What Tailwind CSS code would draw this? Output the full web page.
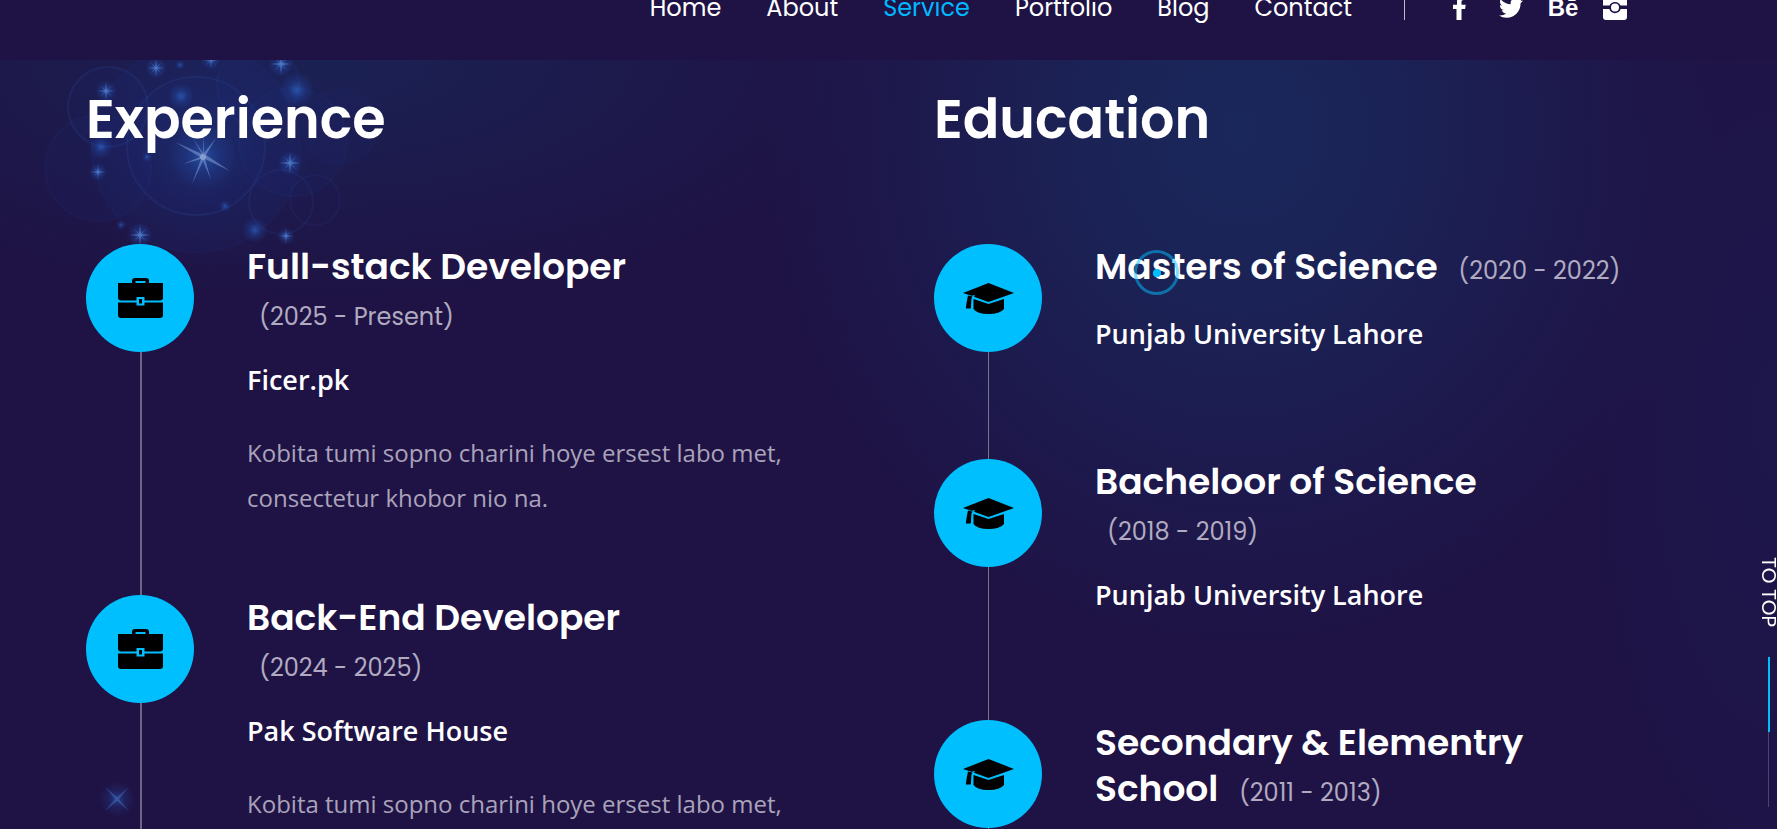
<!DOCTYPE html>
<html lang="en">
<head>
<meta charset="utf-8">
<meta name="viewport" content="width=device-width, initial-scale=1">
<title>Experience and Education</title>
<script src="https://cdn.jsdelivr.net/npm/@tailwindcss/browser@4"></script>
</head>
<body class="overflow-x-hidden bg-[#1f1345] font-[Poppins,Inter,sans-serif] text-white">

<svg class="absolute size-0" aria-hidden="true">
  <symbol id="briefcase" viewBox="0 0 45 40">
    <path d="M14 5V3Q14 0 17 0H28Q31 0 31 3V5H45V19.500Q45 22.500 42 22.500H26.500V19H18.500V22.500H3Q0 22.500 0 19.500V5ZM17.500 5H27.500V3H17.500Z" fill-rule="evenodd"/>
    <path d="M0 24.500H18.500V27.500H26.500V24.500H45V37Q45 40 42 40H3Q0 40 0 37Z"/>
    <path d="M21 21H24V25.500H21Z"/>
  </symbol>
  <symbol id="cap" viewBox="0 0 51 31">
    <path d="M25.500 0L51 10L25.500 19L11 13.700L12 12L8.500 12.800L0 10Z"/>
    <path d="M5 12.500L9.500 13.500Q8 15 8.300 18L7.800 25.500H2.800Q3.500 19 5 12.500Z"/>
    <path d="M10.500 16L25.500 21L41 16V26Q37 31 25.500 31Q14 31 10.500 26Z"/>
  </symbol>
  <radialGradient id="halo"><stop offset="0" stop-color="#2f74e0" stop-opacity=".6"/><stop offset=".5" stop-color="#2458c0" stop-opacity=".25"/><stop offset="1" stop-color="#2458c0" stop-opacity="0"/></radialGradient>
  <symbol id="star" viewBox="-12 -12 24 24">
    <circle r="11" fill="url(#halo)"/>
    <path d="M0-9L.8-1.200L6-6L1.200-.8L9 0L1.200.8L6 6L.8 1.200L0 9L-.8 1.200L-6 6L-1.200.8L-9 0L-1.200-.8L-6-6L-.8-1.200Z" fill="#6f9ae0" opacity=".5"/>
  </symbol>
</svg>

<header class="relative z-10 -mt-2 flex items-center justify-end bg-[#1e1344] pr-[148px] pb-9 leading-8">
  <nav aria-label="Main">
    <ul class="flex gap-[45px] text-2xl leading-8">
      <li><a href="#home">Home</a></li>
      <li><a href="#about">About</a></li>
      <li><a href="#service" class="text-[#00b8ff]">Service</a></li>
      <li><a href="#portfolio">Portfolio</a></li>
      <li><a href="#blog">Blog</a></li>
      <li><a href="#contact">Contact</a></li>
    </ul>
  </nav>
  <span class="mr-10 ml-13 h-6 w-px bg-white/70"></span>
  <ul class="flex h-8 items-center gap-6">
    <li class="flex w-7 justify-center"><a href="#facebook" aria-label="Facebook"><svg class="size-6" viewBox="0 0 24 24" fill="currentColor"><path d="M14.500 24V13h3.600l.6-4.300h-4.200V6c0-1.200.4-2 2.100-2h2.200V.2A30 30 0 0 0 15.500 0c-3.300 0-5.500 2-5.500 5.600v3.100H6V13h3.500v11z"/></svg></a></li>
    <li class="flex w-7 justify-center"><a href="#twitter" aria-label="Twitter"><svg class="size-6" viewBox="0 0 24 24" fill="currentColor"><path d="M23.950 4.570a10 10 0 0 1-2.820.77 4.960 4.960 0 0 0 2.160-2.720c-.95.55-2 .95-3.130 1.180a4.920 4.920 0 0 0-8.380 4.480C7.690 8.090 4.070 6.130 1.640 3.160a4.820 4.820 0 0 0-.67 2.480c0 1.710.87 3.210 2.190 4.100a4.900 4.900 0 0 1-2.230-.62v.06a4.920 4.920 0 0 0 3.950 4.830 5 5 0 0 1-2.210.08 4.940 4.940 0 0 0 4.600 3.420A9.870 9.870 0 0 1 0 19.540a13.990 13.990 0 0 0 7.550 2.210c9.050 0 14-7.500 14-13.980 0-.21 0-.42-.02-.63a9.940 9.940 0 0 0 2.460-2.550z"/></svg></a></li>
    <li class="flex w-7 justify-center"><a href="#behance" aria-label="Behance" class="font-['Liberation_Sans'] text-2xl leading-8 font-bold">Bē</a></li>
    <li class="flex w-7 justify-center"><a href="#instagram" aria-label="Instagram"><svg class="size-6" viewBox="0 0 24 24" fill="currentColor"><path d="M3 0H21Q24 0 24 3V9.500H17.500A6 6 0 0 0 6.500 9.500H0V3Q0 0 3 0ZM0 13H6.300A6 6 0 0 0 17.700 13H24V21Q24 24 21 24H3Q0 24 0 21Z"/><circle cx="12" cy="11.500" r="4"/></svg></a></li>
  </ul>
</header>

<main class="relative isolate overflow-hidden bg-[radial-gradient(ellipse_480px_520px_at_1240px_70px,#1a275b,#1b2356_30%,#1d1a4e_65%,transparent),radial-gradient(ellipse_560px_240px_at_330px_0px,#1b2153,transparent),radial-gradient(ellipse_200px_500px_at_1777px_360px,#1d174c,transparent)] pr-[41px] pl-10">

  <!-- starry decoration behind the headings -->
  <svg class="absolute top-0 left-0 -z-10" width="460" height="769" viewBox="0 60 460 769" aria-hidden="true">
    <circle cx="200" cy="150" r="120" fill="url(#halo)" opacity=".3"/>
    <g fill="#1e3fa0" fill-opacity=".07" stroke="#3b6cc8" stroke-opacity=".13" stroke-width="2">
      <circle cx="108" cy="107" r="40"/>
      <circle cx="98" cy="168" r="53" stroke-opacity=".06"/>
      <circle cx="196" cy="146" r="69"/>
      <circle cx="196" cy="148" r="104" stroke-opacity=".06"/>
      <circle cx="258" cy="85" r="41" stroke-opacity=".08"/>
      <circle cx="293" cy="142" r="54" stroke-opacity=".05"/>
      <circle cx="340" cy="127" r="38" stroke-opacity=".03"/>
      <circle cx="281" cy="202" r="32" fill-opacity=".02" stroke-opacity=".1"/>
      <circle cx="315" cy="200" r="25" fill-opacity=".02" stroke-opacity=".08"/>
    </g>
    <g fill="url(#halo)">
      <circle cx="181" cy="96" r="13"/><circle cx="297" cy="90" r="18"/><circle cx="101" cy="147" r="12"/><circle cx="255" cy="230" r="13"/><circle cx="203" cy="157" r="34" opacity=".8"/>
      <circle cx="121" cy="225" r="5"/><circle cx="180" cy="65" r="5"/><circle cx="225" cy="206" r="6"/><circle cx="147" cy="157" r="5"/>
    </g>
    <use href="#star" x="94" y="79" width="24" height="24"/>
    <use href="#star" x="144" y="56" width="24" height="24"/>
    <use href="#star" x="200" y="49" width="22" height="22"/>
    <use href="#star" x="267" y="50" width="28" height="28"/>
    <use href="#star" x="276" y="149" width="28" height="28"/>
    <use href="#star" x="88" y="162" width="20" height="20"/>
    <use href="#star" x="126" y="221" width="28" height="28"/>
    <use href="#star" x="276" y="226" width="20" height="20"/>
    <path d="M203 130L204 153L216 138L206 155L230 171L205 159L211 180L203 161L192 184L201 159L183 164L200 157L175 142L202 154L192 137L203 153Z" fill="#8fa8d8" opacity=".5"/>
    <circle cx="203" cy="157" r="3" fill="#b4c4e4" opacity=".5"/>
    <circle cx="117" cy="799" r="18" fill="url(#halo)" opacity=".7"/>
    <path d="M105 787L117 797L129 787L119 799L129 811L117 801L105 811L115 799Z" fill="#5a8ae0" opacity=".35"/>
  </svg>

  <div class="grid grid-cols-2">
    <section class="px-[46px] pt-[27px]">
      <h2 class="mb-[93px] text-[54px] leading-16 font-semibold">Experience</h2>
      <ul>
        <li class="flex gap-[53px]">
          <div class="flex flex-col items-center">
            <div class="flex size-[108px] items-center justify-center rounded-full bg-[#00bfff]"><svg class="h-10 w-[45px] fill-black"><use href="#briefcase"/></svg></div>
            <div class="ml-0.5 w-0.5 grow bg-white/35"></div>
          </div>
          <div class="flex-1 pr-12 pb-[75px]">
            <h3 class="text-4xl leading-[46px] font-semibold">Full-stack Developer <span class="ml-3 inline-block text-2xl leading-8 font-normal text-[#b1abc1]">(2025 - Present)</span></h3>
            <p class="mt-[23px] mb-[29px] font-['Open_Sans'] text-[27px] leading-[42px] font-semibold">Ficer.pk</p>
            <p class="font-['Open_Sans'] text-2xl leading-[45px] text-[#aaa3bb]">Kobita tumi sopno charini hoye ersest labo met, consectetur khobor nio na.</p>
          </div>
        </li>
        <li class="flex gap-[53px]">
          <div class="flex flex-col items-center">
            <div class="flex size-[108px] items-center justify-center rounded-full bg-[#00bfff]"><svg class="h-10 w-[45px] fill-black"><use href="#briefcase"/></svg></div>
            <div class="ml-0.5 w-0.5 grow bg-white/35"></div>
          </div>
          <div class="flex-1 pr-12 pb-[75px]">
            <h3 class="text-4xl leading-[46px] font-semibold">Back-End Developer <span class="ml-3 inline-block text-2xl leading-8 font-normal text-[#b1abc1]">(2024 - 2025)</span></h3>
            <p class="mt-[23px] mb-[29px] font-['Open_Sans'] text-[27px] leading-[42px] font-semibold">Pak Software House</p>
            <p class="font-['Open_Sans'] text-2xl leading-[45px] text-[#aaa3bb]">Kobita tumi sopno charini hoye ersest labo met, consectetur khobor nio na.</p>
          </div>
        </li>
      </ul>
    </section>

    <section class="px-[46px] pt-[27px]">
      <h2 class="mb-[93px] text-[54px] leading-16 font-semibold">Education</h2>
      <ul>
        <li class="flex gap-[53px]">
          <div class="flex flex-col items-center">
            <div class="flex size-[108px] items-center justify-center rounded-full bg-[#00bfff]"><svg class="h-[31px] w-[51px] fill-black"><use href="#cap"/></svg></div>
            <div class="w-px grow bg-white/40"></div>
          </div>
          <div class="flex-1 pr-12 pb-[75px]">
            <h3 class="text-4xl leading-[46px] font-semibold">Masters of Science <span class="ml-3 inline-block text-2xl leading-8 font-normal text-[#b1abc1]">(2020 - 2022)</span></h3>
            <p class="mt-[23px] mb-[29px] font-['Open_Sans'] text-[27px] leading-[42px] font-semibold">Punjab University Lahore</p>
          </div>
        </li>
        <li class="flex gap-[53px]">
          <div class="flex flex-col items-center">
            <div class="flex size-[108px] items-center justify-center rounded-full bg-[#00bfff]"><svg class="h-[31px] w-[51px] fill-black"><use href="#cap"/></svg></div>
            <div class="w-px grow bg-white/40"></div>
          </div>
          <div class="flex-1 pr-12 pb-[75px]">
            <h3 class="text-4xl leading-[46px] font-semibold">Bacheloor of Science <span class="ml-3 inline-block text-2xl leading-8 font-normal text-[#b1abc1]">(2018 - 2019)</span></h3>
            <p class="mt-[23px] mb-[29px] font-['Open_Sans'] text-[27px] leading-[42px] font-semibold">Punjab University Lahore</p>
          </div>
        </li>
        <li class="flex gap-[53px]">
          <div class="flex flex-col items-center">
            <div class="flex size-[108px] items-center justify-center rounded-full bg-[#00bfff]"><svg class="h-[31px] w-[51px] fill-black"><use href="#cap"/></svg></div>
            <div class="w-px grow bg-white/40"></div>
          </div>
          <div class="flex-1 pr-12 pb-[75px]">
            <h3 class="text-4xl leading-[46px] font-semibold">Secondary &amp; Elementry School <span class="ml-3 inline-block text-2xl leading-8 font-normal text-[#b1abc1]">(2011 - 2013)</span></h3>
          </div>
        </li>
      </ul>
    </section>
  </div>
</main>

<a href="#home" class="fixed right-0 bottom-[22px] z-20 flex flex-col items-center">
  <span class="text-xl leading-[17px] [writing-mode:vertical-rl]">TO TOP</span>
  <span class="mt-[30px] h-[75px] w-0.5 bg-[#00bfff]"></span>
  <span class="h-[75px] w-px bg-white/20"></span>
</a>

<div class="pointer-events-none fixed top-[250px] left-[1134px] z-30 flex size-[45px] items-center justify-center rounded-full border-3 border-[#00bfff]/50" aria-hidden="true"><span class="size-2 rounded-full bg-[#00bfff]"></span></div>
</body>
</html>
